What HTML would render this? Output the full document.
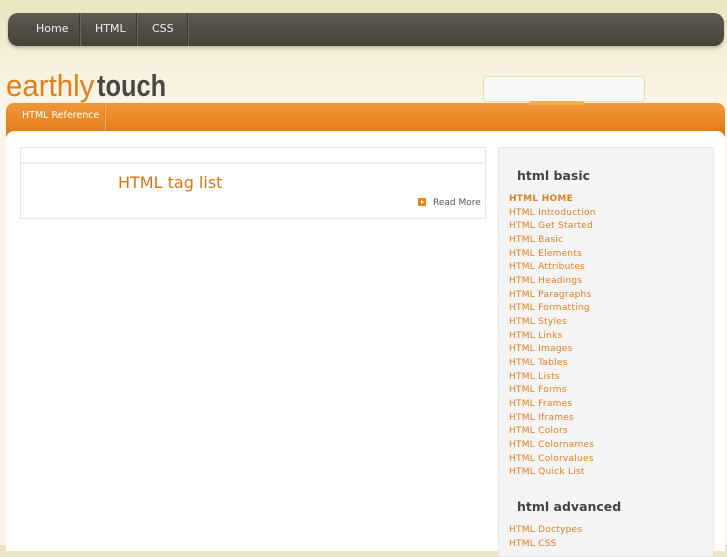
<!DOCTYPE html>
<html><head><meta charset="utf-8"><style>
*{margin:0;padding:0;box-sizing:border-box}
body{width:727px;height:545px;overflow:hidden;background:linear-gradient(#ebe4bf 0,#f6f0da 60px,#faf5e6 110px,#faf5e6);font-family:"DejaVu Sans","Liberation Sans",sans-serif;position:relative}
.nav{position:absolute;left:8px;top:13px;width:716px;height:33px;border-radius:10px;background:linear-gradient(#5e5a50,#45423b);box-shadow:0 2px 3px rgba(0,0,0,.25)}
.nav span{position:absolute;top:9px;font-size:11px;color:#eee}
.nav i{position:absolute;top:0;width:1px;height:33px;background:#3a3832;box-shadow:1px 0 0 #6a665c}
.logo{position:absolute;left:6px;top:68px;font-family:"Liberation Sans",sans-serif;font-size:31px;white-space:nowrap}
.logo .a{color:#e17f1c;display:inline-block;transform:scaleX(.95);transform-origin:left}
.logo .b{color:#4a4844;font-weight:bold;position:absolute;left:91px;top:0;display:inline-block;transform:scaleX(.82);transform-origin:left}
.search{position:absolute;left:483px;top:76px;width:162px;height:26px;background:#f7f7f7;border:1px solid #e9dcb3;border-radius:3px}
.tab{position:absolute;left:529px;top:101px;width:56px;height:4px;background:#f3b04c;border-radius:3px 3px 0 0}
.obar{position:absolute;left:6px;top:103px;width:719px;height:34px;border-radius:8px 8px 0 0;background:linear-gradient(#f0963a,#e98a28 50%,#dd760e)}
.obar span{position:absolute;left:16px;top:7px;color:#fff;font-size:9.5px}
.obar i{position:absolute;left:98px;top:0;width:1px;height:28px;background:#e8872a;box-shadow:1px 0 0 #f4a85a}
.panel{position:absolute;left:6px;top:131px;width:719px;height:420px;background:#fff;border-radius:8px 8px 0 0}
.main{position:absolute;left:20px;top:147px;width:466px;height:72px;border:1px solid #e6e6e6}
.main .top{height:16px;border-bottom:2px solid #eee}
.main h2{position:absolute;left:97px;top:25px;font-size:16px;font-weight:normal;color:#d9760f}
.rm{position:absolute;left:397px;top:50px;font-size:9px;color:#555;white-space:nowrap}
.rm b{display:inline-block;width:8px;height:8px;background:#e8821c;margin-right:7px;vertical-align:-1px;position:relative}
.rm b:after{content:"";position:absolute;left:3px;top:2px;border-left:3px solid #fff;border-top:2px solid transparent;border-bottom:2px solid transparent}
.side{position:absolute;left:498px;top:147px;width:216px;height:410px;background:#f4f4f4;border:1px solid #e6e6e6}
.side h3{position:absolute;left:18px;font-size:12.5px;color:#444;font-weight:bold}
.side ul{position:absolute;left:10px;list-style:none;font-size:9px;color:#e0811f;line-height:13.67px;white-space:nowrap;letter-spacing:.25px}
</style></head><body>
<div class="nav"><span style="left:28px">Home</span><i style="left:71px"></i><span style="left:87px">HTML</span><i style="left:128px"></i><span style="left:144px">CSS</span><i style="left:179px"></i></div>
<div class="logo"><span class="a">earthly</span><span class="b">touch</span></div>
<div class="search"></div>
<div class="obar"><span>HTML Reference</span><i></i></div>
<div class="tab"></div>
<div class="panel"></div>
<div class="main"><div class="top"></div><h2>HTML tag list</h2><div class="rm"><b></b>Read More</div></div>
<div class="side">
<h3 style="top:20px">html basic</h3>
<ul style="top:45px"><li style="font-weight:bold">HTML HOME</li><li>HTML Introduction</li><li>HTML Get Started</li><li>HTML Basic</li><li>HTML Elements</li><li>HTML Attributes</li><li>HTML Headings</li><li>HTML Paragraphs</li><li>HTML Formatting</li><li>HTML Styles</li><li>HTML Links</li><li>HTML Images</li><li>HTML Tables</li><li>HTML Lists</li><li>HTML Forms</li><li>HTML Frames</li><li>HTML Iframes</li><li>HTML Colors</li><li>HTML Colornames</li><li>HTML Colorvalues</li><li>HTML Quick List</li></ul>
<h3 style="top:351px">html advanced</h3>
<ul style="top:376px"><li>HTML Doctypes</li><li>HTML CSS</li></ul>
</div>
</body></html>
